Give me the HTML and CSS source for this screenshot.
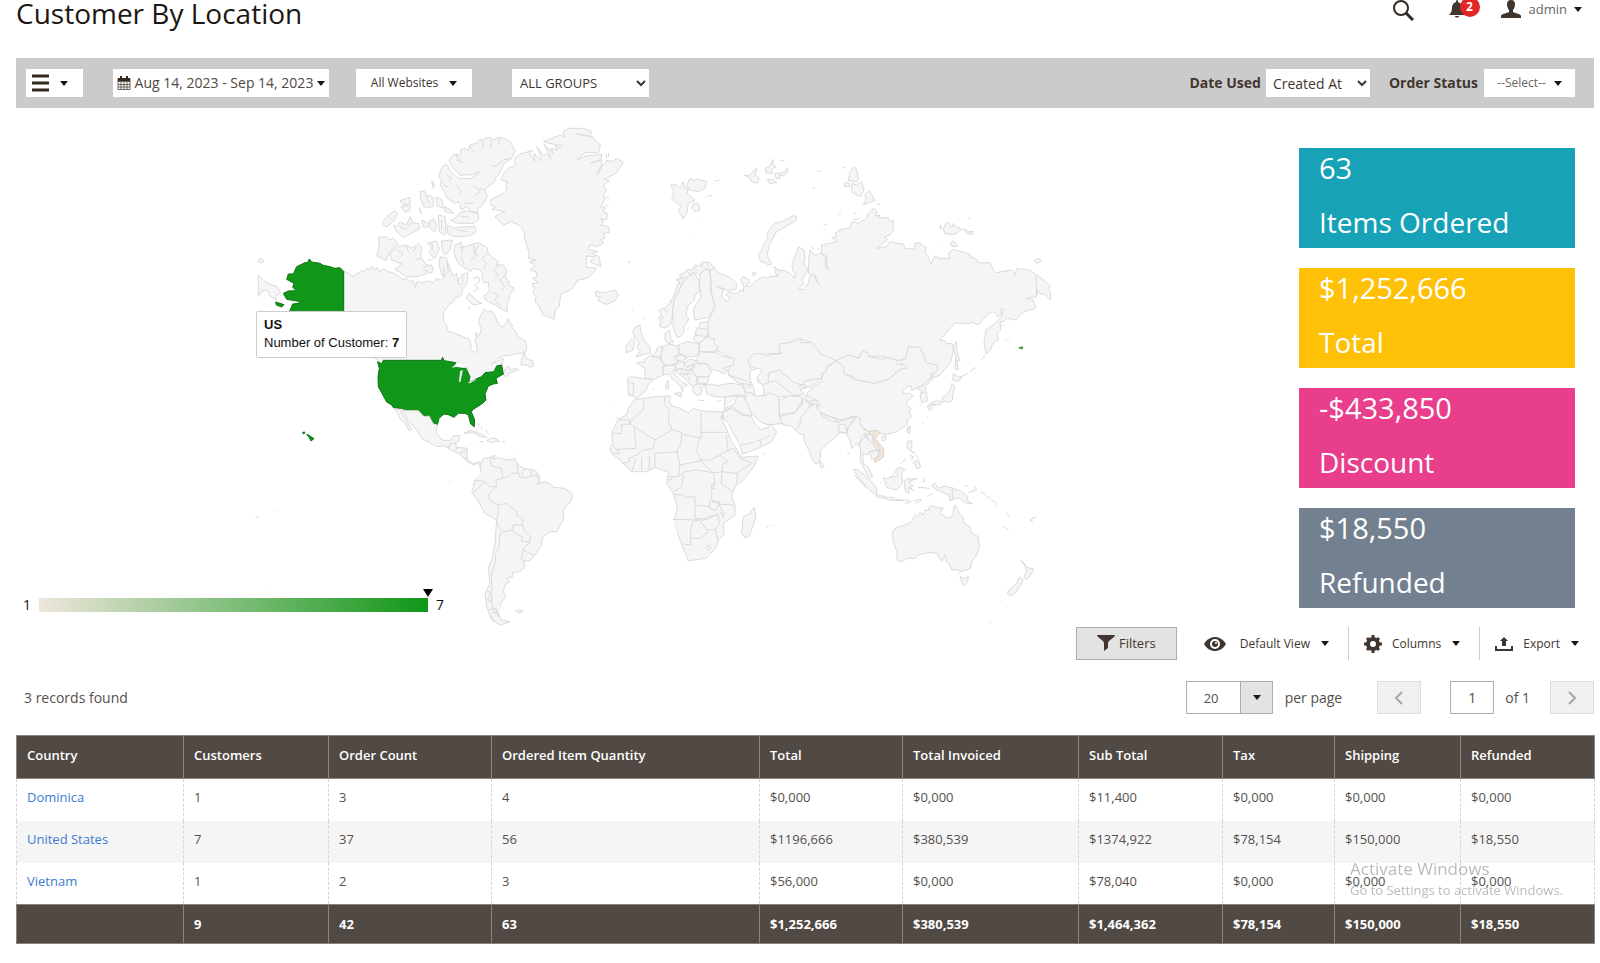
FILE: index.html
```html
<!DOCTYPE html>
<html lang="en">
<head>
<meta charset="utf-8">
<title>Customer By Location</title>
<link rel="stylesheet" href="styles.css">
</head>
<body>
<header class="page-header">
  <h1 class="page-title">Customer By Location</h1>
  <div class="header-tools">
    <button class="icon-button" type="button" aria-label="Search">
      <svg width="21" height="21" viewBox="0 0 21 21"><circle cx="8" cy="8" r="7" fill="none" stroke="#33291f" stroke-width="2"/><path d="M13 13l7 7" stroke="#33291f" stroke-width="3"/></svg>
    </button>
    <button class="icon-button bell" type="button" aria-label="Notifications">
      <svg width="16" height="18" viewBox="0 0 16 18"><path fill="#41362f" d="M8 0c1 0 1 1 1 2 3 1 4 3 4 6s1 5 3 7H0c2-2 3-4 3-7s1-5 4-6c0-1 0-2 1-2zM6 16h4c0 2-4 2-4 0z"/></svg>
      <span class="badge">2</span>
    </button>
    <button class="account" type="button">
      <svg width="20" height="18" viewBox="0 0 20 18"><path fill="#41362f" d="M10 0c3 0 4 2 4 4 0 3-1 5-2 6v2c2 1 8 2 8 4v2H0v-2c0-2 6-3 8-4v-2C7 9 6 7 6 4c0-2 1-4 4-4z"/></svg>
      <span>admin</span><i class="caret"></i>
    </button>
  </div>
</header>

<main>
<form class="toolbar">
  <button class="tool menu-tool" type="button" aria-label="Menu"><svg width="17" height="18" viewBox="0 0 17 18"><path d="M0 2h17M0 9h17M0 16h17" stroke="#33291f" stroke-width="3"/></svg><i class="caret"></i></button>
  <button class="tool date-tool" type="button">
    <svg width="14" height="14" viewBox="0 0 14 14"><path d="M1 2.500h12v11H1zM1 5.500h12M1 8.500h12M1 11h12M4 5v8M7 5v8M10 5v8" fill="none" stroke="#6b635c"/><path d="M1 2h12v3H1z" fill="#33291f"/><path d="M4 0v4M10 0v4" stroke="#33291f" stroke-width="2"/></svg>
    <span>Aug 14, 2023 - Sep 14, 2023</span><i class="caret"></i>
  </button>
  <button class="tool site-tool" type="button"><span>All Websites</span><i class="caret"></i></button>
  <select class="tool group-tool" aria-label="Customer group"><option>ALL GROUPS</option></select>
  <div class="toolbar-end">
    <label for="date-used">Date Used</label>
    <select class="tool used-tool" id="date-used"><option>Created At</option></select>
    <label class="status-label" for="order-status">Order Status</label>
    <button class="tool status-tool" id="order-status" type="button"><span>--Select--</span><i class="caret"></i></button>
  </div>
</form>

<section class="overview">
  <div class="chart">
    <svg class="map" viewBox="242 120 831 507" role="img" aria-label="Customers by country">
      <g class="land" transform="translate(240 110) scale(.33333)">
        <path d="M311 484L325 490L343 500L347 492L360 488L365 480L375 485L380 475L388 478L395 468L402 478L412 473L420 485L430 476L442 484L460 489L475 497L488 510L500 505L510 514L520 512L526 532L532 514L545 519L560 513L580 518L590 505L603 511L615 500L612 480L622 455L632 480L640 500L650 490L655 522L662 524L668 515L665 495L682 488L684 505L678 525L665 540L668 548L660 560L640 565L645 572L625 585L612 605L609 630L620 645L622 662L650 672L688 688L694 705L690 715L700 725L708 727L712 715L705 690L720 672L724 655L716 640L718 625L732 598L745 606L755 602L765 618L775 640L785 652L798 640L805 625L810 640L818 645L815 652L830 668L832 680L845 685L858 695L860 722L840 732L835 730L815 735L790 738L772 745L755 762L772 754L790 745L786 766L765 790L706 808L688 818L665 790L608 760L425 760L400 740L380 700L345 640L311 605Z"/>
        <path d="M790 795L800 800L812 788L835 780L830 774L812 780L804 768L796 775ZM845 745L855 725L856 744L868 750L878 752L880 768L868 772L862 765L843 765Z"/>
        <path d="M55 495L75 515L95 525L112 530L122 548L105 560L110 570L90 558L80 540L65 545L55 560ZM57 447L66 446L72 453L64 458L57 457Z"/>
        <path d="M627 150L640 135L652 132L648 140L665 128L660 120L675 115L685 122L690 105L712 98L720 88L732 92L735 85L750 82L760 90L775 82L795 86L810 95L826 122L815 145L800 155L790 165L775 195L765 205L768 212L750 225L735 240L742 262L728 285L715 295L712 310L690 302L680 290L665 300L655 275L645 280L625 268L612 245L600 225L605 210L596 200L603 178L612 165L622 165L632 185L655 205L690 206L720 185L690 195L660 195L640 175L632 160Z"/>
        <path d="M640 330L660 308L680 302L715 312L716 330L700 340L650 340L632 330ZM622 345L640 355L660 352L680 350L705 350L708 365L690 378L640 380L622 370ZM415 382L440 380L450 390L460 385L475 402L450 425L438 452L410 438L418 410ZM450 430L475 410L500 405L515 415L535 400L545 412L542 440L555 460L570 470L560 490L535 500L500 500L465 478L487 462L455 450ZM562 400L590 393L598 415L585 445L568 430L575 412ZM605 393L637 390L630 420L615 435L606 420ZM600 440L620 445L625 485L608 500L598 470ZM460 345L470 350L480 335L500 345L510 320L520 340L536 340L540 355L515 370L490 382L470 365ZM427 340L440 320L465 302L473 312L455 340L438 350L432 346ZM480 272L510 262L510 280L490 285ZM483 290L510 285L510 300L495 307ZM540 243L555 245L560 260L570 255L580 265L580 290L565 292L552 290L542 265ZM587 262L605 268L612 295L592 288ZM545 330L562 340L580 325L590 345L585 365L565 350L550 352ZM595 315L615 320L618 345L615 375L598 365ZM575 212L584 222L580 235ZM615 290L632 300L640 310L615 305ZM537 293L545 312Z"/>
        <path d="M645 405L665 397L662 415L690 405L715 398L740 412L745 430L755 440L775 455L770 465L790 465L800 480L795 500L808 515L805 525L824 535L810 552L806 575L800 580L803 605L785 598L765 585L745 575L730 562L735 555L748 545L745 515L735 520L725 505L728 488L720 480L700 475L692 485L675 475L660 465L650 450L643 430ZM668 405L665 440L672 465M700 402L705 440M678 565L688 548L705 568L725 580L700 585ZM685 590L690 598M704 672L712 668L710 680ZM550 478L555 470L575 465L580 480L572 490ZM562 452L580 448"/>
        <path class="coast" d="M650 140L665 150M690 108L700 125M725 92L730 110L722 120M755 90L752 112M780 86L775 105M812 145L790 150L765 170L755 165M650 150L670 158M620 195L635 205L625 212M610 225L625 230M650 225L665 245L655 255M700 225L720 245L705 255M735 240L715 235M672 280L700 280M660 318L690 322M650 360L680 365M470 420L490 430L478 442M500 408L505 425M530 410L520 425M545 445L525 450M480 350L500 360M515 335L505 350M445 320L455 330M560 265L570 280M715 405L705 425L715 440M745 430L725 445L740 460L730 475M775 465L760 480L775 495L765 505M800 490L780 510L795 530L782 540M755 545L775 555L765 570L785 590M705 440L690 455M570 335L565 350M605 330V360M575 400L580 425M660 500L655 520M612 470V500M700 505L715 500L720 515L705 525L715 535L700 545"/>
      </g>
      <g class="hot" transform="translate(240 110) scale(.33333)">
        <path d="M413 755L425 762L430 751L604 751L608 742L612 752L648 758L655 770L665 775L680 775L685 790L690 800L686 818L706 808L725 800L735 788L762 785L770 768L785 765L790 792L768 805L772 820L760 822L745 828L738 845L735 852L738 870L728 880L700 898L694 905L704 930L703 950L692 942L685 915L675 910L655 910L642 922L625 914L612 912L597 925L592 944L578 938L567 918L552 920L535 902L500 904L485 895L462 895L455 885L440 876L425 848L415 830L414 800L418 775Z"/>
        <path d="M148 606L158 582L178 580L176 574L140 568L130 550L145 543L170 542L158 532L162 520L140 508L145 492L160 492L170 470L195 458L202 458L208 447L215 456L240 460L250 466L270 470L285 475L300 473L311 484L311 606ZM107 576L132 584L125 591L109 585ZM188 967l6-1 0 4-5 1zM200 973L210 978L222 986L213 993L208 983Z"/>
      </g>
      <g class="lake" transform="translate(240 110) scale(.33333)">
        <path d="M661 783L668 781L661 816L657 815ZM636 773L645 765L650 758L660 756L672 764L678 772L660 772L648 770ZM678 775L690 782L704 790L700 800L692 792ZM684 818L708 806L706 810L690 819Z"/>
      </g>
      <g class="land" transform="translate(480 110) scale(.33333)">
        <path d="M105 145L120 132L130 130L158 120L148 130L165 153L162 130L185 153L182 138L170 110L190 138L200 130L214 145L192 103L220 130L212 115L232 120L225 105L240 115L246 108L200 98L190 95L215 85L240 75L255 80L248 66L265 55L310 55L335 65L330 78L290 72L340 82L345 92L362 105L355 128L315 128L290 150L320 138L365 133L362 148L332 160L365 150L365 165L350 195L368 165L378 158L380 150L395 155L410 145L430 158L410 188L390 200L372 208L388 212L370 228L380 240L370 255L376 265L362 290L376 292L368 304L382 310L380 330L358 325L372 335L360 345L385 350L388 368L370 370L375 385L362 388L370 400L350 410L330 405L325 418L355 425L335 430L358 440L362 470L330 455L345 440L320 438L318 472L350 475L330 500L310 508L293 510L285 525L270 540L242 552L238 590L226 598L222 628L205 620L190 615L175 585L165 575L168 560L158 548L165 535L155 522L175 518L158 505L172 500L168 485L150 480L165 465L148 455L168 450L145 445L148 430L138 400L132 380L135 370L122 348L95 335L70 345L55 330L45 320L75 305L35 298L48 292L32 285L32 270L70 250L80 240L78 225L82 215L65 210L70 190L90 170L100 172L105 160Z"/>
        <path d="M345 545L355 542L362 552L365 545L380 548L390 542L400 545L405 538L415 555L405 572L382 583L365 578L352 570L362 562L348 558ZM572 225L590 225L600 235L610 215L615 235L625 232L622 250L645 270L625 280L620 310L610 327L595 300L605 290L590 280L575 265L582 245ZM620 225L630 205L640 212L655 208L680 215L675 235L655 245L630 240ZM640 280L655 280L660 300L645 305L635 295ZM705 214L718 210M673 263L676 260M683 260L696 256M445 459L451 454M456 601l3 1M492 628l4-2M628 382h2M665 328l3-3"/>
        <path d="M378 132L380 145M386 130V142M374 284L386 290M378 260L388 265"/>
      </g>
      <g class="land" transform="translate(740 140) scale(.33333)">
        <path d="M-90 385L-75 388L-60 400L-30 412L-10 430L-12 448L-35 452L-70 438L-50 450L-55 470L-38 485L-30 475L-42 465L-35 455L-12 462L2 450L10 455L12 440L2 420L8 410L25 418L28 428L18 438L30 440L45 425L70 410L78 415L95 408L112 410L115 405L105 385L118 390L135 392L150 400L165 415L165 400L158 390L156 370L165 350L175 320L192 330L195 360L190 370L202 385L200 400L188 415L190 432L175 445L190 450L205 430L210 408L225 405L230 425L240 435L222 408L205 400L206 360L210 330L225 345L240 340L255 350L265 390L255 380L260 350L245 340L245 315L290 305L275 292L290 290L285 280L300 270L330 262L335 245L355 250L380 235L385 220L400 205L412 215L405 228L420 225L415 233L445 233L450 245L460 240L460 270L450 285L435 290L442 300L430 310L410 325L440 320L450 305L470 310L490 312L495 325L525 328L523 310L540 308L550 320L558 320L556 340L565 350L572 372L585 348L600 355L630 355L625 340L640 328L690 342L690 350L710 358L715 368L750 368L760 390L768 398L815 390L825 405L830 385L870 390L889 405L905 415L932 440L925 445L932 460L932 480L915 462L900 462L893 450L890 470L860 475L880 480L887 505L850 515L827 540L800 535L790 545L780 545L782 570L772 580L775 600L758 610L752 630L738 642L732 610L738 570L760 555L785 530L790 508L780 510L785 522L775 532L760 515L745 520L720 550L710 553L690 545L690 550L645 550L600 600L615 602L620 612L635 610L640 625L635 655L630 670L600 705L575 715L590 675L560 670L540 625L505 620L497 655L475 662L440 652L385 648L368 632L355 655L325 645L288 662L245 645L215 608L180 597L150 608L120 612L122 640L60 642L30 655L30 680L38 690L30 710L40 725L20 735L-10 725L-35 700L-35 690L-17 660L-70 630L-95 590L-98 550L-75 500L-85 460Z"/>
        <path d="M889 405V470M55 345L65 330L70 320L75 305L85 295L80 285L90 265L105 250L125 245L145 235L160 227L170 230L168 242L140 258L110 275L95 300L88 315L82 340L85 355L95 372L85 375L75 368L62 365ZM102 378L112 388L118 398L110 410L106 395ZM330 95L343 80L350 90L355 115L350 125L325 122ZM335 130L350 135L365 125L372 150L362 170L345 163L335 155ZM370 195L378 180L375 165L388 152L405 182L385 188ZM312 130L325 127L330 140L314 140ZM308 82L316 84M12 105L25 108L35 98L50 85L45 105L58 115L52 130L35 125L30 115ZM75 85L90 78L100 58L98 72L108 80L95 88L98 100L80 100ZM82 120L100 118L110 128L88 130ZM105 100L115 100L130 98L142 85L145 95L130 108L118 105L120 115L108 115ZM122 62h12M232 94L242 93M216 142L226 146M610 265L618 250L625 248L635 262L640 250L650 262L655 262L665 268L645 283L615 282ZM600 255L605 262L601 268ZM670 265L685 275L700 275L698 283L680 280ZM630 312L640 302L653 318L635 320ZM685 236L691 233M882 362L895 355L905 362L890 370ZM640 622L648 605L652 640L660 662L650 662L655 690L645 688L647 650ZM640 700L650 708L665 710L660 720L650 725L638 720ZM635 730L643 738L642 752L638 765L637 780L622 788L618 782L595 795L568 792L590 782L605 785L610 770L620 765L632 745ZM562 798L572 797L576 805L568 812ZM578 798L588 794M503 862L512 858L505 880L501 872ZM665 710L682 700M690 695L708 682M724 660L735 645M785 555l6 2M796 597l6 5M808 602l4 2M538 795h6M550 850l2-1M36 402L42 396L48 402L42 409ZM252 255h8M252 268v5M262 300h4M295 224l8-6M340 222l10-4M340 240l18-4M215 320l4 8M235 325l4 6M410 190l10 4M603 302l3 2"/>
        <path d="M572 712L575 720L555 740L560 765L563 782L545 788L540 765L548 755L530 745L550 735ZM540 760L555 755"/>
        <path d="M288 662L310 665L312 700L345 718L405 730L450 715L480 690L497 682L480 665L497 655L505 620L540 622L560 670L592 675L590 695L575 700L572 712L550 735L515 752L515 740L505 738L488 752L490 760L508 760L520 768L500 785L498 795L512 805L508 815L515 830L505 835L500 855L470 875L435 885L415 875L385 875L360 855L358 835L340 828L310 840L275 832L240 820L215 790L200 760L215 745L245 725L250 695Z"/>
        <path d="M288 662L325 645L355 655L362 645L368 632L385 640L388 650L425 658L440 652L475 662L470 672L497 675L500 685L480 688L465 700L450 715L430 722L405 730L345 718L340 710L312 700L310 680Z"/>
        <path d="M30 680L25 660L40 642L60 640L75 648L90 645L125 640L118 630L118 612L150 608L175 597L185 600L182 608L215 608L230 625L245 645L265 650L288 662L275 672L260 678L258 695L245 700L245 715L205 722L185 735L165 740L145 712L120 700L88 700L88 730L65 735L50 715L62 690L45 685Z"/>
        <path d="M65 735L85 728V700L120 690L125 700L145 712L155 725L185 735L195 722L245 715L215 740L180 748L192 762L160 768L120 770L75 765ZM85 728L105 722L165 768M175 740L190 733L200 738L180 748"/>
        <path d="M-15 740L15 738L20 750L40 765L75 768L90 758L115 770L118 800L118 825L130 850L85 855L60 845L40 825L20 800L15 770Z"/>
        <path d="M118 780L145 768L185 770L188 790L165 818L118 825ZM130 855L118 830L165 818L190 775L212 785L205 810L175 850L185 860L165 870L155 858Z"/>
        <path d="M190 768L205 768L235 785L238 800L215 790M195 780L225 802M200 785L235 780"/>
      </g>
      <path class="water" d="M750 371l8-3 4 2-5 8 1 4 5 3 1 10-8 1-4-3 1-6-3-9z"/>
      <g class="land" transform="translate(600 240) scale(.33333)">
        <path d="M178 215L175 210L195 203L205 195L215 180L225 160L228 145L240 125L228 120L245 110L238 105L255 98L262 88L275 90L285 75L300 78L305 68L325 66L345 82L330 90L315 85L300 105L285 95L265 108L250 125L235 155L222 180L218 215L215 250L205 258L192 265L178 258L182 245L175 235L185 222Z"/>
        <path d="M250 125L265 108L285 100L298 125L298 155L285 165L283 180L262 200L258 225L267 237L252 260L250 280L242 288L232 293L220 265L218 215L222 180L235 155Z"/>
        <path d="M300 105L315 88L328 92L332 120L330 145L345 200L325 232L285 240L282 225L280 210L290 190L303 175L298 125Z"/>
        <path d="M110 370L122 365L135 370L132 360L155 345L185 360L195 375L188 390L190 405L160 418L135 415L135 385ZM83 415L90 410L160 420L145 435L135 455L118 468L105 475L98 468L85 465ZM86 427L102 430L98 468M155 350L168 335L172 322L188 318L185 335L183 352ZM185 330L190 320L205 312L235 318L238 345L225 352L235 370L195 378L183 360ZM235 315L262 305L298 312L295 325L298 345L280 350L260 350L238 340ZM188 378L225 375L228 388L218 392L225 405L245 425L262 435L250 440L248 455L240 435L215 415L205 402L190 405ZM223 460L245 458L243 472ZM223 350L240 343L262 355L245 365L230 360ZM225 372L240 363L255 370L250 385L230 388ZM250 370L270 358L290 362L280 375L260 380ZM255 385L285 370L275 388L258 392ZM275 390L290 372L318 370L330 390L335 395L325 410L290 410ZM290 412L328 410L322 430L292 430ZM222 392L245 388L258 392L275 390L290 412L292 432L278 440L262 425L245 408ZM240 398L262 405L270 420M250 402L275 400M278 440L292 432L318 434L300 445L308 450L300 465L288 465L278 455ZM292 350L298 335L350 335L365 348L403 355L400 375L370 385L385 390L370 402L355 392L335 388L325 372L290 368ZM298 310L320 290L345 298L342 310L355 320L345 338L298 335ZM280 300L285 285L290 265L298 262L300 248L325 245L322 290L298 310ZM285 285L322 290M296 265L320 268M195 300L195 280L210 270L212 295L222 305L205 312ZM104 262L120 255L122 275L130 298L150 322L152 340L132 342L108 352L120 335L110 320L118 310L105 295L98 278ZM78 318L95 298L103 305L100 330L78 338ZM198 430L205 420V448L197 445ZM315 435L335 432L350 437L390 430L430 435L438 468L410 465L375 472L345 470L320 462ZM385 405L445 425L460 440L465 462L435 455L425 435ZM425 430L455 435L440 445M295 480L312 482M350 485L365 480M262 268L268 262M158 447L164 449M85 67l5-4M96 212l2-1M133 238l2-1M30 500l3 2"/>
        <path class="coast" d="M180 225L190 232L183 240M195 208L200 218M215 190L208 180M232 130L245 132M238 118L255 112M262 95L270 102M285 82L290 92M305 72L308 84M322 70L328 80"/>
      </g>
      <g class="land" transform="translate(600 380) scale(.33333)">
        <path d="M105 58L135 55L165 50L205 48L212 50L208 65L215 78L240 85L265 98L280 85L305 92L335 95L368 95L372 115L362 110L385 160L395 185L418 220L425 232L475 228L460 262L430 300L410 315L398 335L395 350L405 375L405 405L370 430L372 465L355 478L350 500L318 535L275 541L265 543L258 525L240 480L222 420L232 380L220 340L200 310L205 275L185 270L165 262L140 275L95 275L65 245L35 220L30 205L38 190L35 160L55 118L80 105L85 85Z"/>
        <path d="M55 120H88V133H65V160H38M88 128L130 88L132 62M103 140L165 180L215 150L240 155L245 162L303 175V92M195 50L192 70L208 90L205 120L215 150M303 157H382M245 162L243 190L230 215L235 235L240 255L290 245L305 240L290 215L298 175M103 140L108 205L48 208L35 190M88 128L103 140M165 180L160 205L130 210L110 225L85 235M50 208L60 220L35 220M165 220L235 215M165 220V262M298 240L330 240L360 225L385 245L370 250L365 275L410 280L455 250L420 235L400 205L375 215L360 225M205 290L235 290L255 275L290 270L340 278L370 275M300 240L335 275M340 278L345 310L335 330L335 360L355 372L402 375M365 280V312L398 335M412 280L410 312M222 343L250 345L255 352L285 350V375L330 380L335 388L350 390L360 365L328 365L330 385M285 378V415L320 418L355 400M218 418L300 420L280 423L272 450V495L250 492M272 475L300 475L325 455L302 425L325 410L355 405L358 430L345 450L325 448M345 450L355 485M318 500L328 496L332 505L322 510ZM125 232V270M148 230V270M108 235L95 275M85 235L90 245L65 250M240 255L235 290M250 285L245 320L222 335M215 290V300H203M355 370L372 400L370 412L362 395M345 312H335V325H345M378 165L385 215"/>
        <path d="M462 382L468 405L460 435L448 468L435 473L425 460L430 410L450 400ZM375 50L410 48L430 50L445 75L455 108L425 105L395 85L372 95ZM375 85L385 80L405 70L410 50M370 95L395 80L425 100L455 112L462 128L475 140L480 150L505 142L508 130L530 155L515 185L485 200L455 212L428 222L420 195L400 160L385 130L368 112ZM422 195L440 192L480 180L512 165M480 180L485 200M368 95L370 120L385 105"/>
        <path d="M590 147L605 125L600 115L630 80L650 70L650 85L665 100L700 115L715 125L740 118L765 110L765 120L745 140L740 160L718 155L715 165L695 180L662 210L660 245L648 252L638 240L628 215L612 180L610 162L600 162L588 152ZM662 97L690 110L713 115V127L690 122L665 107ZM715 132L738 135L740 160L718 158ZM718 118L738 120M660 243L673 258L665 265L660 258ZM740 165L745 140L765 108L782 115L780 135L800 155L785 170L778 200L770 190L755 205L750 180ZM778 190L790 175L800 160L805 180L820 190L830 210L808 215L802 225L788 220L790 250L805 262L818 292L805 290L792 265L780 240L782 215ZM790 165L815 162L820 175L838 205L832 215L822 195L808 182ZM808 215L835 210L833 230L815 238ZM845 170L858 168L855 183L846 182ZM922 185L935 182L936 200L930 212L945 220L935 215L922 205ZM925 145L932 138L928 160L922 155ZM928 225L940 230L935 240M945 222L955 235M938 248L955 240L962 262L950 265L945 252ZM902 252L918 235M760 268L775 270L810 300L830 325V345L810 332L795 315L780 300ZM763 285L800 325M828 347L845 347L860 352L880 352L885 358L912 362L870 360L830 350ZM850 292L860 297L875 290L895 262L915 268L905 280L908 310L890 330L860 322ZM868 292L890 290L895 275M915 300L922 295L930 298L952 295L925 305L940 318L930 320L940 332L925 322L928 338L918 338L913 322ZM968 290L975 300L970 308M890 362L930 360M915 370L935 365M940 362L965 358M945 370L965 362M955 322L990 325M995 318L1005 310L1015 325L1035 318L1060 325L1085 335L1105 352L1100 360L1118 372L1095 368L1075 352L1050 362L1048 345L1010 330ZM1057 322V362M1105 338L1130 330L1125 320M1095 317h8M1143 335l15 10M1160 350l12 5M1175 360l15 10M1183 377l6-2M1220 398l10 14M1207 437L1225 450M1290 425l8-10 10-4M1292 418l6 10M743 225l3-8M488 222h6M500 442l6-4M514 437h4M982 350L998 340M1218 682h3M1170 725l1 4M968 128l3-1M980 113l3-2M840 308h4M34 115h2M50 113h4"/>
        <path d="M880 450L892 442L915 435L935 425L945 405L952 410L960 398L970 405L975 390L985 392L990 378L1000 377L1005 382L1030 385L1020 400L1035 410L1052 415L1060 400L1062 380L1066 375L1078 400L1088 410L1092 430L1110 440L1115 460L1135 470L1138 500L1130 525L1115 545L1112 565L1085 575L1068 568L1055 570L1048 552L1040 548L1035 525L1025 545L1010 520L990 517L955 525L945 535L920 535L905 545L890 540L892 520L885 500L878 480L882 475L876 470ZM1080 590L1090 595L1105 590L1103 605L1092 617L1085 605ZM1075 580L1078 584M1262 542L1272 548L1280 562L1300 567L1298 575L1285 595L1277 598L1272 590L1280 575L1275 558ZM1258 592L1270 600L1262 615L1245 640L1232 648L1222 640L1228 628L1250 610Z"/>
        <path class="few" d="M805 155L830 150L840 160L825 175L850 205L850 232L825 247L823 238L840 225L838 205L818 178L822 168L808 162Z"/>
      </g>
      <path class="pacific" d="M1019 348l2-1 2 0-1 2z"/>
      <g class="land" transform="translate(240 330) scale(.33333)">
        <path d="M462 235L500 242L535 242L552 260L567 258L580 282L592 285L588 305L605 330L630 332L640 318L660 316L655 335L640 340L628 345L628 355L612 348L590 350L545 325L530 300L505 275L490 245L482 245L500 275L515 298L508 302L495 280L482 270L472 248Z"/>
        <path d="M625 358L632 340L648 340V352L683 355L680 372L683 390L700 400L720 395L722 408L712 400L700 405L680 395L668 380L655 370ZM640 365L655 352M660 370L683 358M668 380L682 385"/>
        <path d="M720 410L730 385L750 382L765 375L762 388L775 382L800 390L825 388L835 405L852 415L872 418L890 425L900 445L892 462L915 455L935 465L940 472L975 475L997 492L995 510L970 540V570L950 605L930 605L907 622L905 645L888 670L870 693L850 692L855 710L840 725L818 727V740L800 745L808 755L795 765L790 785L798 800L782 820L778 840L770 845L785 870L810 875L780 885L755 870L740 830L735 790L750 760L745 715L755 690L765 640L770 570L735 550L712 510L695 485L700 470L705 450L718 440L722 425Z"/>
        <path d="M760 380L750 390L755 408L785 415L788 445L768 450L770 470L748 470L735 455L705 450M700 485L715 475L735 455M770 470L745 495L750 512L775 525L775 545L770 570M788 445L805 440L815 430L835 430L830 402M835 430L840 442L855 445L890 435L900 455M855 415L845 430L850 440M872 420L875 440M775 525L800 520L830 545V558L848 565V585L820 585L815 602L785 605L778 590L770 572M848 585L855 605L870 620V635L845 635L848 622L815 602M870 635L848 660L845 690M848 660L880 675M785 605L778 620V650L768 665L765 700L755 730V820L765 850L780 855M740 780L752 790L742 810L755 815M745 840L768 835L775 860M752 855L765 875M755 850L775 845M892 462L905 460M672 310L690 301L720 310L740 322L720 320L700 308ZM740 332L752 325L765 325L778 333L755 337ZM718 335H732M785 335h10M712 280l8 5M722 290l4 8M736 300l10 12M825 360l2-1M822 385h6M628 455l5 4M102 542l4 2M46 563l10-2M78 768h2M827 842L838 840L850 842L838 850Z"/>
      </g>
      <rect class="tip-box" x="256.500" y="311.500" width="150" height="46" rx="1"/>
      <text class="tip-text tip-strong" x="264" y="329">US</text>
      <text class="tip-text" x="264" y="347">Number of Customer: <tspan class="tip-strong">7</tspan></text>
    </svg>
    <div class="legend"><span>1</span><div class="ramp"><i class="marker"></i></div><span>7</span></div>
  </div>
  <div class="cards">
    <article class="card teal"><strong>63</strong><span>Items Ordered</span></article>
    <article class="card amber"><strong>$1,252,666</strong><span>Total</span></article>
    <article class="card pink"><strong>-$433,850</strong><span>Discount</span></article>
    <article class="card slate"><strong>$18,550</strong><span>Refunded</span></article>
  </div>
</section>

<div class="grid-actions">
  <button class="filters" type="button"><svg width="18" height="16" viewBox="0 0 18 16"><path fill="#41362f" d="M0 0h18c0 3-7 5-7 8v5l-4 3V8C7 5 0 3 0 0z"/></svg>Filters</button>
  <button class="action view-action" type="button"><svg width="22" height="14" viewBox="0 0 22 14"><path fill="#41362f" fill-rule="evenodd" d="M0 7C3 2 7 0 11 0s8 2 11 7c-3 5-7 7-11 7S3 12 0 7zm11-5a5 5 0 1 0 0 10 5 5 0 0 0 0-10z"/><circle cx="11" cy="7" r="3" fill="#41362f"/><circle cx="12" cy="6" r="1" fill="#fff"/></svg><span>Default View</span><i class="caret"></i></button>
  <button class="action column-action" type="button"><svg width="18" height="18" viewBox="0 0 18 18"><circle cx="9" cy="9" r="5" fill="none" stroke="#41362f" stroke-width="4"/><path stroke="#41362f" stroke-width="3" d="M9 0v3M9 15v3M0 9h3M15 9h3M3 3l2 2M13 13l2 2M15 3l-2 2M5 13l-2 2"/></svg><span>Columns</span><i class="caret"></i></button>
  <button class="action export-action" type="button"><svg width="18" height="14" viewBox="0 0 18 14"><path fill="#41362f" d="M0 9h2v3h14V9h2v5H0zM9 0l4 4h-2v5H7V4H5z"/></svg><span>Export</span><i class="caret"></i></button>
</div>

<div class="grid-pager">
  <p class="records">3 records found</p>
  <div class="page-size"><select id="page-size"><option>20</option></select><i class="caret"></i></div>
  <label class="per-page" for="page-size">per page</label>
  <button class="step" type="button" aria-label="Previous page"><svg width="8" height="14" viewBox="0 0 8 14"><path d="M7 1L1 7l6 6" fill="none" stroke="#a8a5a3" stroke-width="2"/></svg></button>
  <input class="page-number" type="text" value="1" aria-label="Page">
  <span class="page-count">of 1</span>
  <button class="step" type="button" aria-label="Next page"><svg width="8" height="14" viewBox="0 0 8 14"><path d="M1 1l6 6-6 6" fill="none" stroke="#a8a5a3" stroke-width="2"/></svg></button>
</div>

<table class="grid">
  <colgroup><col class="w-country"><col class="w-customers"><col class="w-orders"><col class="w-quantity"><col class="w-total"><col class="w-invoiced"><col class="w-subtotal"><col class="w-tax"><col class="w-shipping"><col class="w-refunded"></colgroup>
  <thead><tr><th>Country</th><th>Customers</th><th>Order Count</th><th>Ordered Item Quantity</th><th>Total</th><th>Total Invoiced</th><th>Sub Total</th><th>Tax</th><th>Shipping</th><th>Refunded</th></tr></thead>
  <tbody>
    <tr><td><a href="#dominica">Dominica</a></td><td>1</td><td>3</td><td>4</td><td>$0,000</td><td>$0,000</td><td>$11,400</td><td>$0,000</td><td>$0,000</td><td>$0,000</td></tr>
    <tr><td><a href="#united-states">United States</a></td><td>7</td><td>37</td><td>56</td><td>$1196,666</td><td>$380,539</td><td>$1374,922</td><td>$78,154</td><td>$150,000</td><td>$18,550</td></tr>
    <tr><td><a href="#vietnam">Vietnam</a></td><td>1</td><td>2</td><td>3</td><td>$56,000</td><td>$0,000</td><td>$78,040</td><td>$0,000</td><td>$0,000</td><td>$0,000</td></tr>
  </tbody>
  <tfoot><tr><td></td><td>9</td><td>42</td><td>63</td><td>$1,252,666</td><td>$380,539</td><td>$1,464,362</td><td>$78,154</td><td>$150,000</td><td>$18,550</td></tr></tfoot>
</table>
</main>
<aside class="watermark"><strong>Activate Windows</strong><span>Go to Settings to activate Windows.</span></aside>
</body>
</html>
```
FILE: styles.css
```css
* { box-sizing: border-box; }
body { margin: 0; padding: 0 6px 0 16px; background: #fff; color: #41362f; font: 13px/18px "Open Sans", sans-serif; }
button, select, input { font: inherit; color: inherit; margin: 0; padding: 0; border: 0; border-radius: 0; background: none; }
button { display: flex; align-items: center; }
svg { display: block; flex: none; }
.caret { flex: none; width: 0; height: 0; border: 4px solid transparent; border-top: 5px solid #1c1713; border-bottom: 0; }

.page-header { display: flex; align-items: flex-start; justify-content: space-between; height: 58px; }
.page-title { margin: 0; font-size: 28px; line-height: 26px; font-weight: 400; color: #1c1713; }
.header-tools { display: flex; align-items: flex-start; padding-right: 12px; }
.bell { position: relative; margin-left: 35px; }
.badge { position: absolute; left: 11px; top: -3px; width: 20px; height: 20px; border-radius: 10px; background: #e22626; color: #fff; font-size: 12px; font-weight: 700; line-height: 20px; text-align: center; }
.account { margin-left: 36px; color: #666; }
.account span { margin: 0 7px 0 8px; }

.toolbar { display: flex; align-items: center; height: 50px; padding: 0 19px 0 10px; background: #cbcbcb; }
.tool { height: 28px; background: #fff; }
.menu-tool { width: 57px; padding-left: 6px; gap: 11px; }
.date-tool { width: 216px; margin-left: 30px; justify-content: center; gap: 4px; font-size: 14px; color: #514943; }
.site-tool { width: 116px; margin-left: 27px; justify-content: center; gap: 11px; font-size: 12px; }
.group-tool { width: 137px; margin-left: 40px; padding-left: 4px; }
.toolbar-end { display: flex; align-items: center; margin-left: auto; font-size: 14px; font-weight: 700; }
.toolbar-end .tool { font-weight: 400; }
.used-tool { width: 104px; margin-left: 5px; padding-left: 3px; }
.status-label { margin-left: 19px; }
.status-tool { width: 91px; margin-left: 6px; justify-content: center; gap: 8px; color: #666; }
.toolbar-end .status-tool { font-size: 12px; }

.overview { display: flex; height: 519px; }
.chart { position: relative; flex: 1; padding: 12px 0 0 0; }
.map { width: 100%; height: 507px; }
.land path { fill: #f5f5f5; stroke: #dadada; stroke-width: 3; stroke-linejoin: round; }
.land .coast { fill: none; }
.land .few { fill: #efe6dc; stroke: #ddd0c2; }
.hot path { fill: #109618; stroke: #0b7411; stroke-width: 3; stroke-linejoin: round; }
.lake path { fill: #fff; stroke: #c8d8c8; stroke-width: 1; }
.water { fill: #fff; stroke: #ddd; stroke-width: 1; }
.pacific { fill: #109618; stroke: #4c9a50; stroke-width: 1; }
.tip-box { fill: #fff; stroke: #ccc; }
.tip-text { font: 13px "Liberation Sans", sans-serif; fill: #111; }
.tip-strong { font-weight: 700; }
.legend { position: absolute; left: 7px; bottom: 13px; display: flex; align-items: center; gap: 8px; color: #111; font-size: 14px; }
.ramp { position: relative; width: 389px; height: 14px; background: linear-gradient(90deg, #efe6dc, #109618); }
.marker { position: absolute; right: -5px; top: -9px; width: 0; height: 0; border: 5px solid transparent; border-top: 8px solid #000; border-bottom: 0; }
.cards { display: flex; flex-direction: column; gap: 20px; width: 276px; margin: 40px 19px 0 0; }
.card { display: flex; flex-direction: column; justify-content: space-between; height: 100px; padding: 0 20px 6px; color: #fff; font-size: 28px; line-height: 40px; }
.card strong { font-weight: 400; font-size: 29px; }
.teal { background: #17a2b8; }
.amber { background: #ffc107; }
.pink { background: #e83e8c; }
.slate { background: #728090; }

.grid-actions { display: flex; justify-content: flex-end; height: 33px; }
.filters { width: 101px; height: 33px; padding-bottom: 2px; justify-content: center; gap: 4px; border: 1px solid #adadad; background: #e3e3e3; }
.action { height: 33px; border-left: 1px solid #ccc; font-size: 12px; }
.action .caret { margin-left: 11px; }
.view-action { padding: 0 19px 0 27px; border-left: 0; }
.view-action span { margin-left: 14px; }
.column-action { padding: 0 19px 0 15px; }
.column-action span, .export-action span { margin-left: 10px; }
.export-action { padding: 0 15px 0 15px; }

.grid-pager { display: flex; align-items: center; height: 33px; margin-top: 21px; font-size: 14px; color: #55504c; }
.records { margin: 0 auto 0 8px; }
.page-size { position: relative; font-size: 13px; }
.page-size select { appearance: none; width: 87px; height: 33px; padding: 0 0 0 17px; border: 1px solid #adadad; background: linear-gradient(90deg, #fff 53px, #adadad 53px, #adadad 54px, #e3e3e3 54px); }
.page-size .caret { position: absolute; right: 12px; top: 14px; pointer-events: none; }
.per-page { margin: 0 35px 0 12px; }
.step { width: 44px; height: 33px; justify-content: center; border: 1px solid #ddd; background: #f0f0f0; }
.page-number { width: 44px; height: 33px; margin-left: 29px; border: 1px solid #adadad; text-align: center; }
.page-count { margin: 0 20px 0 11px; }

.grid { width: 100%; margin-top: 21px; table-layout: fixed; border-collapse: collapse; font-size: 13px; }
.w-country { width: 167px; }
.w-customers { width: 145px; }
.w-orders { width: 163px; }
.w-quantity { width: 268px; }
.w-total { width: 143px; }
.w-invoiced { width: 176px; }
.w-subtotal { width: 144px; }
.w-tax { width: 112px; }
.w-shipping { width: 126px; }
.w-refunded { width: 134px; }
.grid th, .grid td { padding: 0 10px; text-align: left; }
.grid th, .grid tfoot td { border: 1px solid #8a837f; background: #514943; color: #fff; font-weight: 700; }
.grid th { height: 43px; padding-bottom: 5px; font-weight: 600; }
.grid tbody td { height: 42px; padding-bottom: 5px; border-left: 1px dashed #d6d6d6; border-right: 1px dashed #d6d6d6; color: #55504c; }
.grid tbody tr:nth-child(2) { background: #f5f5f5; }
.grid tfoot td { height: 39px; padding-bottom: 1px; }
.grid a { color: #3b7bd4; text-decoration: none; }

.watermark { position: fixed; right: 37px; bottom: 64px; display: flex; flex-direction: column; color: rgba(150, 150, 150, .65); font: 13px/18px "Open Sans", sans-serif; pointer-events: none; }
.watermark strong { font-size: 17px; line-height: 24px; font-weight: 400; }
```
